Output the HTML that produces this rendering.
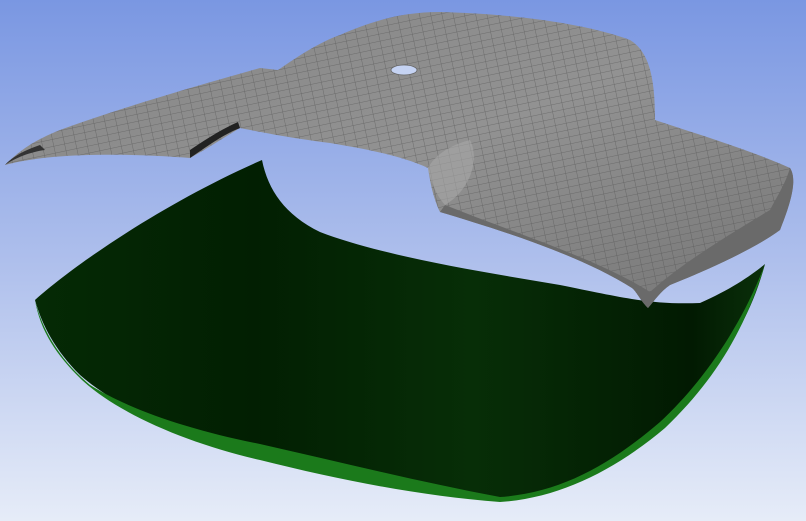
<!DOCTYPE html>
<html><head><meta charset="utf-8"><style>
html,body{margin:0;padding:0;width:806px;height:521px;overflow:hidden}
svg{display:block}
</style></head><body>
<svg width="806" height="521" viewBox="0 0 806 521" xmlns="http://www.w3.org/2000/svg">
<defs>
<linearGradient id="bg" x1="0" y1="0" x2="0" y2="1">
<stop offset="0" stop-color="#7a97e2"/>
<stop offset="0.5" stop-color="#aebfec"/>
<stop offset="1" stop-color="#e6ecf8"/>
</linearGradient>
<linearGradient id="gr" x1="0" y1="0" x2="1" y2="0">
<stop offset="0" stop-color="#052a05"/>
<stop offset="0.3" stop-color="#021f02"/>
<stop offset="0.6" stop-color="#072e07"/>
<stop offset="0.9" stop-color="#021a02"/>
<stop offset="1" stop-color="#0a300a"/>
</linearGradient>
<linearGradient id="gy" x1="0" y1="0" x2="1" y2="1">
<stop offset="0" stop-color="#858585"/>
<stop offset="0.5" stop-color="#929292"/>
<stop offset="1" stop-color="#767676"/>
</linearGradient>
<pattern id="mesh" width="11" height="7" patternUnits="userSpaceOnUse" patternTransform="rotate(-12)">
<path d="M0 0H11M0 0V7" stroke="#505050" stroke-width="0.8" fill="none" opacity="0.7"/>
</pattern>
</defs>
<rect width="806" height="521" fill="url(#bg)"/>
<!-- green hood -->
<path d="M35 300 C80 260 170 200 262 160 C268 190 285 215 320 232 C380 255 470 270 560 285 C620 297 650 305 700 303 C730 290 752 275 765 264 C750 320 720 370 660 425 C610 468 560 495 500 500 C420 492 340 478 260 455 C190 440 120 410 80 375 C55 350 42 325 35 300 Z" fill="url(#gr)"/>
<path d="M35 300 C42 330 60 360 90 385 C130 410 190 430 260 444 C340 462 420 482 500 497 C560 493 610 465 660 422 C700 385 740 330 765 264 C745 330 715 380 665 428 C615 470 560 498 500 502 C420 496 340 480 260 460 C190 444 120 415 82 380 C56 355 40 330 35 300 Z" fill="#1b7a1b"/>
<!-- gray mesh body -->
<g>
<path d="M5 165 C20 150 35 140 60 130 C120 108 200 85 260 68 L278 70 C300 55 320 42 340 35 C370 22 400 12 440 12 C520 14 590 25 630 40 C650 52 655 80 655 120 C700 135 750 150 790 168 C798 180 790 205 780 230 C760 245 720 265 670 285 C660 292 655 300 648 308 C640 300 637 292 632 288 C580 255 500 230 440 212 C432 195 430 180 428 168 C400 155 360 148 330 143 C290 138 260 132 240 128 C220 140 205 150 190 158 C150 155 60 150 5 165 Z" fill="url(#gy)"/>
<path d="M5 165 C20 150 35 140 60 130 C120 108 200 85 260 68 L278 70 C300 55 320 42 340 35 C370 22 400 12 440 12 C520 14 590 25 630 40 C650 52 655 80 655 120 C700 135 750 150 790 168 C798 180 790 205 780 230 C760 245 720 265 670 285 C660 292 655 300 648 308 C640 300 637 292 632 288 C580 255 500 230 440 212 C432 195 430 180 428 168 C400 155 360 148 330 143 C290 138 260 132 240 128 C220 140 205 150 190 158 C150 155 60 150 5 165 Z" fill="url(#mesh)"/>
<path d="M440 212 C500 230 580 255 632 288 C637 292 640 300 648 308 C655 300 660 292 670 285 C720 265 760 245 780 230 C790 205 798 180 790 168 C785 185 775 200 770 210 C720 240 680 265 650 292 C600 260 520 235 445 205 Z" fill="#6a6a6a"/>
<path d="M428 168 C435 155 450 145 470 140 C480 160 470 190 445 205 C436 195 430 180 428 168 Z" fill="#a8a8a8" opacity="0.6"/>
<path d="M190 158 C205 148 222 135 240 128 L238 122 C220 130 205 140 190 150 Z" fill="#222"/>
<path d="M5 165 C15 158 30 152 45 150 L40 145 C25 150 12 157 5 165 Z" fill="#333"/>
<ellipse cx="404" cy="70" rx="13" ry="5" fill="#c5d3f3" stroke="#666" stroke-width="0.8"/>
</g>
</svg>
</body></html>
